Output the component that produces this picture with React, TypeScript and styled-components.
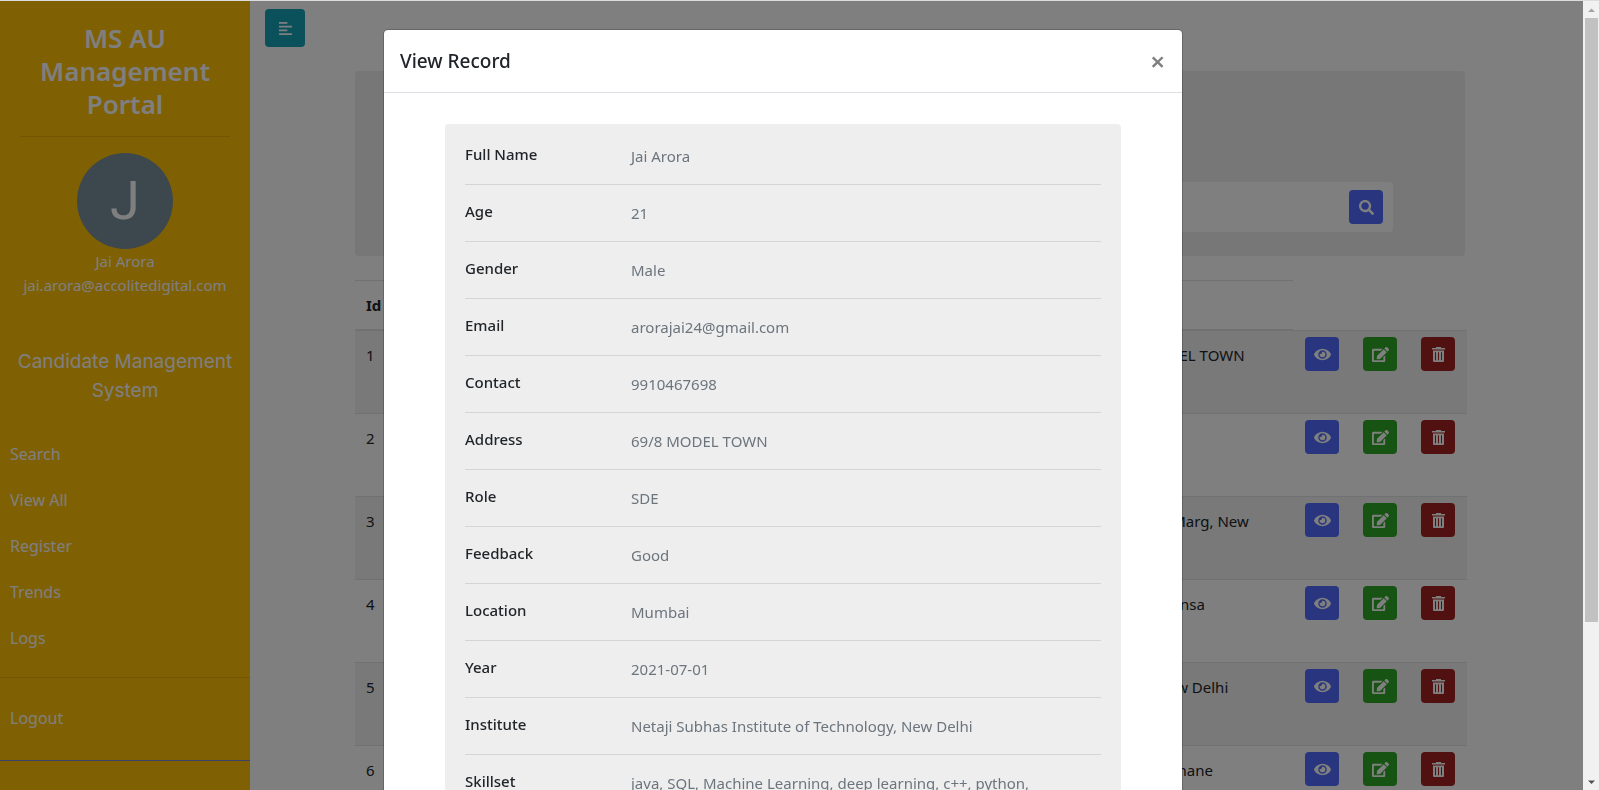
import React from "react";
import styled, { createGlobalStyle } from "styled-components";
import { FaAlignLeft, FaSearch, FaEye, FaEdit } from "react-icons/fa";

const GlobalStyle = createGlobalStyle`
  *, *::before, *::after { box-sizing: border-box; }
  body {
    margin: 0;
    overflow: hidden;
    background: #fff;
    color: #212529;
    font-family: "Noto Sans", "Open Sans", sans-serif;
    font-size: 15px;
    line-height: 24px;
  }
  button { font: inherit; cursor: pointer; }
`;

const Page = styled.div`
  display: flex;
  height: 100vh;
  overflow: hidden;
  border-top: 1px solid #dadce0;
`;

/* Sidebar */

const Sidebar = styled.nav`
  flex: none;
  width: 250px;
  background: #ffc107;
  color: #fff;
`;

const SidebarHeader = styled.header`
  padding: 21px 20px 0;
  text-align: center;
`;

const PortalTitle = styled.h3`
  margin: 0;
  padding-bottom: 15px;
  border-bottom: 1px solid rgba(0, 0, 0, 0.1);
  font-size: 26px;
  font-weight: 600;
  line-height: 33px;
`;

const Profile = styled.div`
  display: flex;
  flex-direction: column;
  align-items: center;
  padding-top: 16px;
`;

const Avatar = styled.div`
  display: flex;
  align-items: center;
  justify-content: center;
  width: 96px;
  height: 96px;
  border-radius: 50%;
  background: #78909c;
  font-family: Roboto, sans-serif;
  font-size: 54px;
  font-weight: 400;
`;

const ProfileLine = styled.span`
  white-space: nowrap;
`;

const SystemName = styled.p`
  margin: 50px 0 26px;
  font-family: Inter, sans-serif;
  font-size: 19px;
  line-height: 29px;
  text-align: center;
`;

const MenuList = styled.ul<{ $rule: string }>`
  margin: 0;
  padding: 0 0 16px;
  border-bottom: 1px solid ${(p) => p.$rule};
  list-style: none;

  & + & { padding-top: 17px; padding-bottom: 19px; }
`;

const MenuLink = styled.a`
  display: block;
  padding: 10px;
  color: #fff;
  font-size: 16px;
  line-height: 26px;
  text-decoration: none;
`;

/* Content */

const Main = styled.main`
  flex: 1;
  min-width: 0;
  padding: 8px 28px 0 15px;
`;

const ToggleButton = styled.button`
  display: flex;
  align-items: center;
  justify-content: center;
  width: 40px;
  height: 38px;
  border: 0;
  border-radius: 4px;
  background: #17a2b8;
  color: #fff;
`;

const Container = styled.div`
  max-width: 1110px;
  margin: 24px auto 0;
`;

const SearchPanel = styled.section`
  display: flex;
  align-items: flex-end;
  height: 185px;
  padding: 24px 72px;
  border-radius: 4px;
  background: #eee;
`;

const SearchBox = styled.form`
  display: flex;
  flex: 1;
  align-items: center;
  height: 50px;
  padding: 0 10px;
  border-radius: 4px;
  background: #fff;
`;

const SearchInput = styled.input`
  flex: 1;
  border: 0;
  outline: 0;
  background: transparent;
  font: inherit;
`;

const IconButton = styled.button<{ $color: string }>`
  display: flex;
  align-items: center;
  justify-content: center;
  width: 34px;
  height: 34px;
  padding: 0;
  border: 0;
  border-radius: 4px;
  background: ${(p) => p.$color};
  color: #fff;
`;

const Table = styled.table`
  width: calc(100% + 2px);
  margin-top: 24px;
  border-spacing: 0;
  table-layout: fixed;
`;

const Col = styled.col<{ $w?: number }>`
  ${(p) => (p.$w ? `width: ${p.$w}px;` : "")}
`;

const HeadCell = styled.th`
  height: 50px;
  padding: 12px 11px;
  border-top: 1px solid #dee2e6;
  border-bottom: 1px solid #dee2e6;
  font-weight: 700;
  text-align: left;
`;

const Row = styled.tr`
  height: 83px;
  &:nth-child(odd) { background: rgba(0, 0, 0, 0.05); }
`;

const Cell = styled.td`
  padding: 12px 11px;
  border-top: 1px solid #dee2e6;
  vertical-align: top;
`;

const ActionCell = styled(Cell)`
  padding: 6px 12px;
`;

/* Modal */

const Backdrop = styled.div`
  position: fixed;
  inset: 1px 16px 0 0;
  display: flex;
  justify-content: center;
  align-items: flex-start;
  padding: 28px 17px 0 0;
  overflow: hidden;
  background: rgba(0, 0, 0, 0.5);
`;

const Dialog = styled.section`
  flex: 0 1 800px;
  border: 1px solid rgba(0, 0, 0, 0.2);
  border-radius: 5px;
  background: #fff;
  background-clip: padding-box;
`;

const DialogHeader = styled.header`
  display: flex;
  align-items: center;
  justify-content: space-between;
  padding: 16px;
  border-bottom: 1px solid #dee2e6;
`;

const DialogTitle = styled.h5`
  margin: 0;
  font-size: 19px;
  font-weight: 500;
  line-height: 30px;
`;

const CloseButton = styled.button`
  padding: 0 1px;
  border: 0;
  background: transparent;
  color: #7f7f7f;
  font-size: 26px;
  font-weight: 600;
  line-height: 28px;
`;

const DialogBody = styled.div`
  padding: 31px 61px;
`;

const Record = styled.dl`
  margin: 0;
  padding: 4px 20px;
  border-radius: 4px;
  background: #eee;
`;

const Field = styled.div`
  display: flex;
  align-items: flex-start;
  min-height: 57px;
  border-bottom: 1px solid #d5d5d5;
`;

const FieldName = styled.dt`
  flex: none;
  width: 166px;
  padding-top: 14px;
  font-weight: 500;
`;

const FieldValue = styled.dd`
  flex: 1;
  margin: 0;
  padding: 16px 0;
  color: #6c757d;
`;

/* Page scrollbar */

const Scrollbar = styled.div`
  display: flex;
  flex: none;
  flex-direction: column;
  align-items: center;
  width: 16px;
  background: #f1f1f1;
`;

const ScrollArrow = styled.svg`
  flex: none;
  width: 16px;
  height: 17px;
`;

const ScrollTrack = styled.div`
  flex: 1;
  width: 13px;
`;

const ScrollThumb = styled.div`
  height: 80%;
  background: #c1c1c1;
`;

const TrashIcon = () => (
  <svg width="13" height="15" viewBox="0 0 13 15" fill="currentColor" aria-hidden="true">
    <path d="M4 0h5v1h4v1.500H0V1h4Z" />
    <path
      fillRule="evenodd"
      d="M1 3.500h11V14a1 1 0 0 1-1 1H2a1 1 0 0 1-1-1Z M3 5.300v7.900h1V5.300Z M6 5.300v7.900h1V5.300Z M9 5.300v7.900h1V5.300Z"
    />
  </svg>
);

const menu = ["Search", "View All", "Register", "Trends", "Logs"];

const candidates = [
  { id: 1, address: "69/8 MODEL TOWN" },
  { id: 2, address: "Mumbai" },
  { id: 3, address: "Mathura Marg, New Delhi" },
  { id: 4, address: "Barha, Mansa" },
  { id: 5, address: "Rohini New Delhi" },
  { id: 6, address: "Balkum, Thane" },
];

const record: [string, string][] = [
  ["Full Name", "Jai Arora"],
  ["Age", "21"],
  ["Gender", "Male"],
  ["Email", "arorajai24@gmail.com"],
  ["Contact", "9910467698"],
  ["Address", "69/8 MODEL TOWN"],
  ["Role", "SDE"],
  ["Feedback", "Good"],
  ["Location", "Mumbai"],
  ["Year", "2021-07-01"],
  ["Institute", "Netaji Subhas Institute of Technology, New Delhi"],
  ["Skillset", "java, SQL, Machine Learning, deep learning, c++, python,"],
];

export default function App() {
  return (
    <>
      <GlobalStyle />
      <Page>
        <Sidebar>
          <SidebarHeader>
            <PortalTitle>MS AU Management Portal</PortalTitle>
            <Profile>
              <Avatar>J</Avatar>
              <ProfileLine>Jai Arora</ProfileLine>
              <ProfileLine>jai.arora@accolitedigital.com</ProfileLine>
            </Profile>
          </SidebarHeader>
          <SystemName>Candidate Management System</SystemName>
          <MenuList $rule="rgba(0, 0, 0, 0.1)">
            {menu.map((item) => (
              <li key={item}><MenuLink href="#">{item}</MenuLink></li>
            ))}
          </MenuList>
          <MenuList $rule="#7386d5">
            <li><MenuLink href="#">Logout</MenuLink></li>
          </MenuList>
        </Sidebar>

        <Main>
          <ToggleButton aria-label="Toggle sidebar"><FaAlignLeft size={15} /></ToggleButton>
          <Container>
            <SearchPanel>
              <SearchBox>
                <SearchInput aria-label="Search candidates" />
                <IconButton type="button" $color="#536dfe" aria-label="Search"><FaSearch size={15} /></IconButton>
              </SearchBox>
            </SearchPanel>
            <Table>
              <colgroup>
                <Col $w={60} />
                <Col />
                <Col $w={196} />
                <Col $w={58} />
                <Col $w={58} />
                <Col $w={58} />
              </colgroup>
              <thead>
                <tr>
                  <HeadCell>Id</HeadCell>
                  <HeadCell />
                  <HeadCell />
                </tr>
              </thead>
              <tbody>
                {candidates.map((c) => (
                  <Row key={c.id}>
                    <Cell>{c.id}</Cell>
                    <Cell />
                    <Cell>{c.address}</Cell>
                    <ActionCell><IconButton $color="#536dfe" aria-label="View"><FaEye size={17} /></IconButton></ActionCell>
                    <ActionCell><IconButton $color="#2ea626" aria-label="Edit"><FaEdit size={17} /></IconButton></ActionCell>
                    <ActionCell><IconButton $color="#a52222" aria-label="Delete"><TrashIcon /></IconButton></ActionCell>
                  </Row>
                ))}
              </tbody>
            </Table>
          </Container>
        </Main>

        <Scrollbar aria-hidden="true">
          <ScrollArrow viewBox="0 0 16 17"><path d="M8.5 7.5 L12 11 H5 Z" fill="#a3a3a3" /></ScrollArrow>
          <ScrollTrack><ScrollThumb /></ScrollTrack>
          <ScrollArrow viewBox="0 0 16 17"><path d="M8.5 11 L12 7.5 H5 Z" fill="#505050" /></ScrollArrow>
        </Scrollbar>
      </Page>

      <Backdrop>
        <Dialog role="dialog" aria-modal="true" aria-labelledby="record-title">
          <DialogHeader>
            <DialogTitle id="record-title">View Record</DialogTitle>
            <CloseButton aria-label="Close">×</CloseButton>
          </DialogHeader>
          <DialogBody>
            <Record>
              {record.map(([name, value]) => (
                <Field key={name}>
                  <FieldName>{name}</FieldName>
                  <FieldValue>{value}</FieldValue>
                </Field>
              ))}
            </Record>
          </DialogBody>
        </Dialog>
      </Backdrop>
    </>
  );
}
